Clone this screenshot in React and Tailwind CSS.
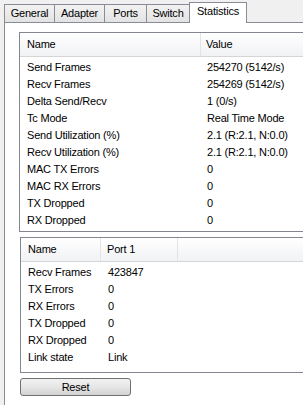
const tabs = ["General", "Adapter", "Ports", "Switch", "Statistics"];
const tabWidths = ["w-[51px]", "w-[51px]", "w-[43px]", "w-[44px]", "w-[58px]"];

const stats = [
  ["Send Frames", "254270 (5142/s)"],
  ["Recv Frames", "254269 (5142/s)"],
  ["Delta Send/Recv", "1 (0/s)"],
  ["Tc Mode", "Real Time Mode"],
  ["Send Utilization (%)", "2.1 (R:2.1, N:0.0)"],
  ["Recv Utilization (%)", "2.1 (R:2.1, N:0.0)"],
  ["MAC TX Errors", "0"],
  ["MAC RX Errors", "0"],
  ["TX Dropped", "0"],
  ["RX Dropped", "0"],
];

const ports = [
  ["Recv Frames", "423847"],
  ["TX Errors", "0"],
  ["RX Errors", "0"],
  ["TX Dropped", "0"],
  ["RX Dropped", "0"],
  ["Link state", "Link"],
];

const headerCls =
  "flex h-[24px] items-center border-b border-[#d5d5d5] bg-gradient-to-b from-white to-[#f1f2f4]";

export default function App() {
  return (
    <div
      className="w-[303px] h-[405px] overflow-hidden bg-[#f0f0f0] text-[11px] tracking-[-0.2px] text-black"
      style={{ fontFamily: '"Liberation Sans", Arial, sans-serif' }}
    >
      <div className="flex h-[22px] items-end pl-[4px]">
        {tabs.map((t, i) => {
          const selected = t === "Statistics";
          return (
            <div
              key={t}
              className={
                (i > 0 ? "-ml-px " : "") +
                tabWidths[i] +
                (selected
                  ? " relative z-10 -mb-px h-[21px] bg-white pb-[3px]"
                  : " h-[18px] bg-gradient-to-b from-[#f2f2f2] to-[#e3e3e3]") +
                " flex items-center justify-center border-l border-r border-t border-[#898c95]"
              }
            >
              {t}
            </div>
          );
        })}
      </div>

      <div className="ml-[4px] h-[383px] w-[330px] border-l border-t border-[#898c95] bg-white">
        <div className="ml-[14px] mt-[9px] w-[310px] border border-[#828790] pb-[2px]">
          <div className={headerCls}>
            <div className="flex h-full w-[181px] items-center border-r border-[#e3e4e6] pl-[7px]">
              Name
            </div>
            <div className="pl-[5px]">Value</div>
          </div>
          <div className="pt-[2px]">
            {stats.map(([n, v]) => (
              <div key={n} className="flex h-[17px] items-center">
                <div className="w-[182px] pl-[7px]">{n}</div>
                <div className="pl-[5px]">{v}</div>
              </div>
            ))}
          </div>
        </div>

        <div className="ml-[15px] mt-[5px] w-[310px] border border-[#828790] pb-[6px]">
          <div className={headerCls}>
            <div className="flex h-full w-[80px] items-center border-r border-[#e3e4e6] pl-[7px]">
              Name
            </div>
            <div className="flex h-full w-[77px] items-center border-r border-[#e3e4e6] pl-[6px]">
              Port 1
            </div>
          </div>
          <div className="pt-[2px]">
            {ports.map(([n, v]) => (
              <div key={n} className="flex h-[17px] items-center">
                <div className="w-[80px] pl-[7px]">{n}</div>
                <div className="pl-[7px]">{v}</div>
              </div>
            ))}
          </div>
        </div>

        <button
          type="button"
          className="ml-[15px] mt-[5px] flex h-[18px] w-[111px] items-center justify-center rounded-[3px] border border-[#707070] bg-gradient-to-b from-[#f2f2f2] via-[#e6e6e6] to-[#d2d2d2]"
        >
          Reset
        </button>
      </div>
    </div>
  );
}
